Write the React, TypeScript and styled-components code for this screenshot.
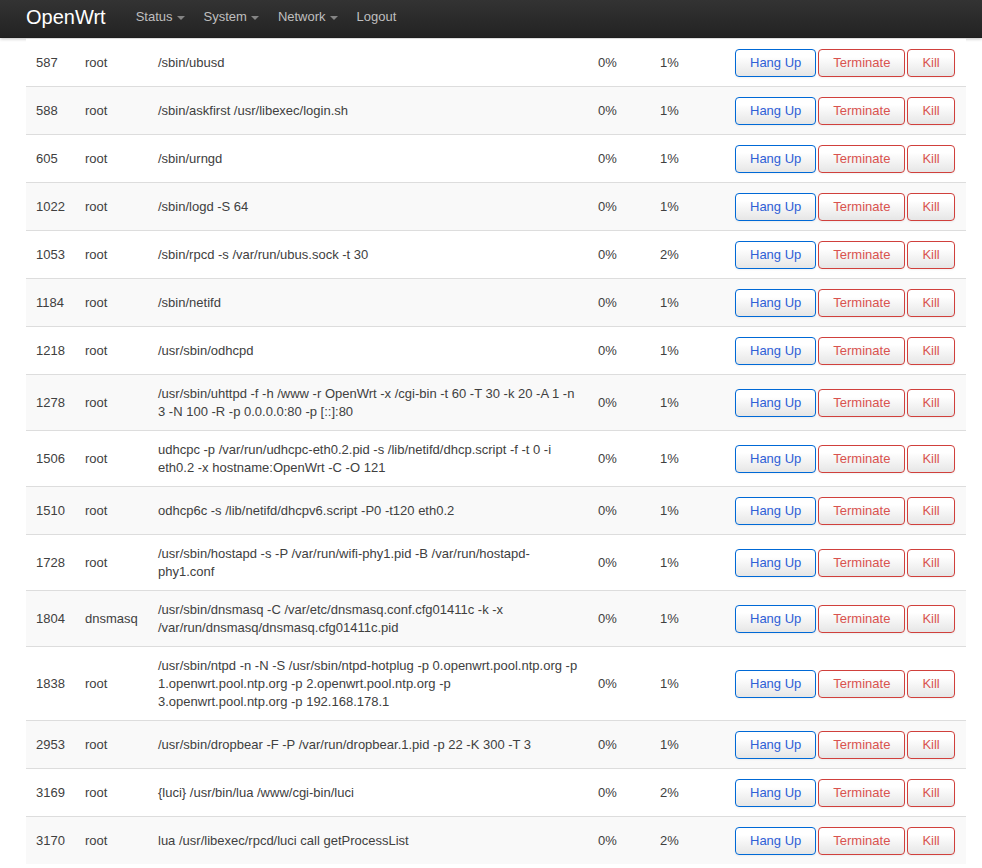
import React from 'react'
import styled, { createGlobalStyle } from 'styled-components'

const GlobalStyle = createGlobalStyle`
  html, body {
    margin: 0;
    padding: 0;
    background: #fff;
  }
  body {
    font-family: "Liberation Sans", Arial, Helvetica, sans-serif;
    font-size: 13px;
    line-height: 18px;
    color: #404040;
  }
`

interface ProcessRow {
  pid: string
  user: string
  command: string
  cpu: string
  mem: string
}

const processes: ProcessRow[] = [
  { pid: '587', user: 'root', command: '/sbin/ubusd', cpu: '0%', mem: '1%' },
  { pid: '588', user: 'root', command: '/sbin/askfirst /usr/libexec/login.sh', cpu: '0%', mem: '1%' },
  { pid: '605', user: 'root', command: '/sbin/urngd', cpu: '0%', mem: '1%' },
  { pid: '1022', user: 'root', command: '/sbin/logd -S 64', cpu: '0%', mem: '1%' },
  { pid: '1053', user: 'root', command: '/sbin/rpcd -s /var/run/ubus.sock -t 30', cpu: '0%', mem: '2%' },
  { pid: '1184', user: 'root', command: '/sbin/netifd', cpu: '0%', mem: '1%' },
  { pid: '1218', user: 'root', command: '/usr/sbin/odhcpd', cpu: '0%', mem: '1%' },
  {
    pid: '1278',
    user: 'root',
    command: '/usr/sbin/uhttpd -f -h /www -r OpenWrt -x /cgi-bin -t 60 -T 30 -k 20 -A 1 -n 3 -N 100 -R -p 0.0.0.0:80 -p [::]:80',
    cpu: '0%',
    mem: '1%',
  },
  {
    pid: '1506',
    user: 'root',
    command: 'udhcpc -p /var/run/udhcpc-eth0.2.pid -s /lib/netifd/dhcp.script -f -t 0 -i eth0.2 -x hostname:OpenWrt -C -O 121',
    cpu: '0%',
    mem: '1%',
  },
  { pid: '1510', user: 'root', command: 'odhcp6c -s /lib/netifd/dhcpv6.script -P0 -t120 eth0.2', cpu: '0%', mem: '1%' },
  {
    pid: '1728',
    user: 'root',
    command: '/usr/sbin/hostapd -s -P /var/run/wifi-phy1.pid -B /var/run/hostapd-phy1.conf',
    cpu: '0%',
    mem: '1%',
  },
  {
    pid: '1804',
    user: 'dnsmasq',
    command: '/usr/sbin/dnsmasq -C /var/etc/dnsmasq.conf.cfg01411c -k -x /var/run/dnsmasq/dnsmasq.cfg01411c.pid',
    cpu: '0%',
    mem: '1%',
  },
  {
    pid: '1838',
    user: 'root',
    command:
      '/usr/sbin/ntpd -n -N -S /usr/sbin/ntpd-hotplug -p 0.openwrt.pool.ntp.org -p 1.openwrt.pool.ntp.org -p 2.openwrt.pool.ntp.org -p 3.openwrt.pool.ntp.org -p 192.168.178.1',
    cpu: '0%',
    mem: '1%',
  },
  { pid: '2953', user: 'root', command: '/usr/sbin/dropbear -F -P /var/run/dropbear.1.pid -p 22 -K 300 -T 3', cpu: '0%', mem: '1%' },
  { pid: '3169', user: 'root', command: '{luci} /usr/bin/lua /www/cgi-bin/luci', cpu: '0%', mem: '2%' },
  { pid: '3170', user: 'root', command: 'lua /usr/libexec/rpcd/luci call getProcessList', cpu: '0%', mem: '2%' },
]

const TopBar = styled.header`
  height: 38px;
  box-sizing: border-box;
  padding: 0 0 4px 26px;
  background: linear-gradient(to bottom, #333333, #222222);
  box-shadow: 0 1px 3px rgba(0, 0, 0, 0.25), inset 0 -1px 0 rgba(0, 0, 0, 0.1);
  display: flex;
  align-items: center;
`

const Brand = styled.a`
  color: #ffffff;
  font-size: 20px;
  line-height: 24px;
  text-decoration: none;
  margin-right: 20px;
`

const Nav = styled.nav`
  display: flex;
  align-items: center;
`

const NavLink = styled.a`
  color: #bfbfbf;
  font-size: 13px;
  line-height: 18px;
  padding: 6px 10px;
  text-decoration: none;
  display: flex;
  align-items: center;
`

const Caret = styled.span`
  display: inline-block;
  width: 0;
  height: 0;
  margin-left: 4px;
  margin-right: -1px;
  margin-top: 1px;
  border-left: 4px solid transparent;
  border-right: 4px solid transparent;
  border-top: 4px solid #bfbfbf;
  opacity: 0.6;
`

const Main = styled.main`
  padding: 0 16px 0 26px;
`

const Table = styled.table`
  width: 940px;
  border-collapse: collapse;
  table-layout: fixed;
`

const Row = styled.tr<{ $striped: boolean }>`
  background: ${p => (p.$striped ? '#f9f9f9' : '#ffffff')};
`

const Cell = styled.td<{ $width: number }>`
  width: ${p => p.$width}px;
  padding: 10px 10px 9px;
  border-top: 1px solid #dddddd;
  vertical-align: middle;
  text-align: left;
  line-height: 18px;
  box-sizing: border-box;
`

const Actions = styled.div`
  display: flex;
  gap: 2px;
`

const Button = styled.button<{ $tone: 'primary' | 'danger' }>`
  font-family: "Liberation Sans", Arial, Helvetica, sans-serif;
  font-size: 13px;
  line-height: 18px;
  height: 28px;
  padding: 4px 14px;
  border-radius: 4px;
  border: 1px solid ${p => (p.$tone === 'primary' ? '#0069d6' : '#d0403c')};
  color: ${p => (p.$tone === 'primary' ? '#2f5fd6' : '#d9534f')};
  background: linear-gradient(to bottom, #ffffff 25%, #e6e6e6);
  box-shadow: inset 0 1px 0 rgba(255, 255, 255, 0.2), 0 1px 2px rgba(0, 0, 0, 0.05);
  cursor: pointer;
  white-space: nowrap;
`

const widths = { pid: 49, user: 73, command: 440, cpu: 62, mem: 75, actions: 241 }

const App: React.FC = () => {
  return (
    <>
      <GlobalStyle />
      <TopBar>
        <Brand href="#">OpenWrt</Brand>
        <Nav>
          <NavLink href="#">
            Status<Caret />
          </NavLink>
          <NavLink href="#">
            System<Caret />
          </NavLink>
          <NavLink href="#">
            Network<Caret />
          </NavLink>
          <NavLink href="#">Logout</NavLink>
        </Nav>
      </TopBar>
      <Main>
        <Table>
          <tbody>
            {processes.map((p, index) => (
              <Row key={p.pid} $striped={index % 2 === 1}>
                <Cell $width={widths.pid}>{p.pid}</Cell>
                <Cell $width={widths.user}>{p.user}</Cell>
                <Cell $width={widths.command}>{p.command}</Cell>
                <Cell $width={widths.cpu}>{p.cpu}</Cell>
                <Cell $width={widths.mem}>{p.mem}</Cell>
                <Cell $width={widths.actions}>
                  <Actions>
                    <Button $tone="primary">Hang Up</Button>
                    <Button $tone="danger">Terminate</Button>
                    <Button $tone="danger">Kill</Button>
                  </Actions>
                </Cell>
              </Row>
            ))}
          </tbody>
        </Table>
      </Main>
    </>
  )
}

export default App
